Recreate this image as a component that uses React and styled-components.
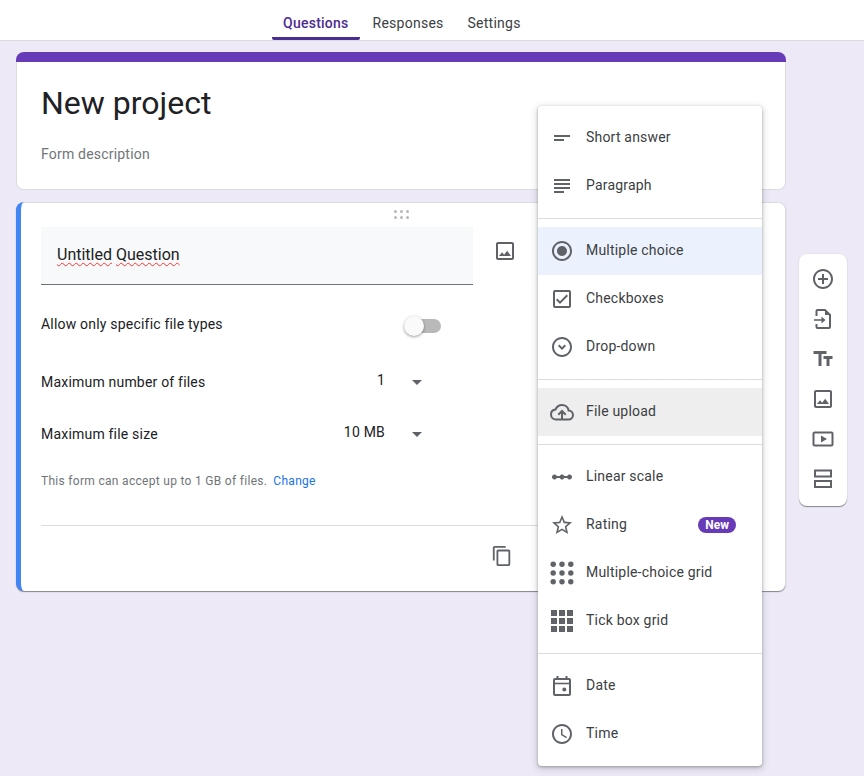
import React from "react";
import styled, { createGlobalStyle } from "styled-components";

const GlobalStyle = createGlobalStyle`
  *, *:before, *:after { box-sizing: border-box; }
  html, body { margin: 0; height: 100%; }
  body {
    background: #ede9f7;
    font-family: Roboto, "Liberation Sans", Arial, sans-serif;
    overflow: hidden;
  }
`;

const paths = {
  shortText: "M4 9h16v2H4V9zm0 4h10v2H4v-2z",
  paragraph: "M14 17H4v2h10v-2zm6-8H4v2h16V9zM4 15h16v-2H4v2zM4 5v2h16V5H4z",
  radio: "M12 7c-2.76 0-5 2.24-5 5s2.24 5 5 5 5-2.24 5-5-2.24-5-5-5zm0-5C6.48 2 2 6.48 2 12s4.48 10 10 10 10-4.48 10-10S17.52 2 12 2zm0 18c-4.42 0-8-3.58-8-8s3.58-8 8-8 8 3.58 8 8-3.58 8-8 8z",
  checkbox: "M19 3H5a2 2 0 0 0-2 2v14a2 2 0 0 0 2 2h14a2 2 0 0 0 2-2V5a2 2 0 0 0-2-2zm0 16H5V5h14v14zM17.99 9l-1.41-1.42-6.59 6.59-2.58-2.57-1.42 1.41 4 3.99z",
  dropdown: "M12 2C6.48 2 2 6.48 2 12s4.48 10 10 10 10-4.48 10-10S17.52 2 12 2zm0 18c-4.42 0-8-3.58-8-8s3.58-8 8-8 8 3.58 8 8-3.58 8-8 8zm0-5l-4-4 1.41-1.41L12 12.17l2.59-2.58L16 11z",
  scale: "M19.5 9.5c-1.03 0-1.9.62-2.29 1.5h-2.92c-.39-.88-1.26-1.5-2.29-1.5s-1.9.62-2.29 1.5H6.79c-.39-.88-1.26-1.5-2.29-1.5C3.12 9.5 2 10.62 2 12s1.12 2.5 2.5 2.5c1.03 0 1.9-.62 2.29-1.5h2.92c.39.88 1.26 1.5 2.29 1.5s1.9-.62 2.29-1.5h2.92c.39.88 1.26 1.5 2.29 1.5 1.38 0 2.5-1.12 2.5-2.5s-1.12-2.5-2.5-2.5z",
  star: "M22 9.24l-7.19-.62L12 2 9.19 8.63 2 9.24l5.46 4.73L5.82 21 12 17.27 18.18 21l-1.63-7.03L22 9.24zM12 15.4l-3.76 2.27 1-4.28-3.32-2.88 4.38-.38L12 6.1l1.71 4.04 4.38.38-3.32 2.88 1 4.28L12 15.4z",
  time: "M11.99 2C6.47 2 2 6.48 2 12s4.47 10 9.99 10C17.52 22 22 17.52 22 12S17.52 2 11.99 2zM12 20c-4.42 0-8-3.58-8-8s3.58-8 8-8 8 3.58 8 8-3.58 8-8 8zm.5-13H11v6l5.25 3.15.75-1.23-4.5-2.67z",
  add: "M13 7h-2v4H7v2h4v4h2v-4h4v-2h-4V7zm-1-5C6.48 2 2 6.48 2 12s4.48 10 10 10 10-4.48 10-10S17.52 2 12 2zm0 18c-4.41 0-8-3.59-8-8s3.59-8 8-8 8 3.59 8 8-3.59 8-8 8z",
  title: "M2.5 4v3h5v12h3V7h5V4h-13zm19 5h-9v3h3v7h3v-7h3V9z",
  image: "M19 5v14H5V5h14m0-2H5c-1.1 0-2 .9-2 2v14c0 1.1.9 2 2 2h14c1.1 0 2-.9 2-2V5c0-1.1-.9-2-2-2zm-4.86 8.86l-3 3.87L9 13.14 6 17h12l-3.86-5.14z",
  copy: "M16 1H4c-1.1 0-2 .9-2 2v14h2V3h12V1zm3 4H8c-1.1 0-2 .9-2 2v14c0 1.1.9 2 2 2h11c1.1 0 2-.9 2-2V7c0-1.1-.9-2-2-2zm0 16H8V7h11v14z",
  arrow: "M7 10l5 5 5-5z",
};

const Line = styled.path`
  fill: none;
  stroke: currentColor;
  stroke-width: ${(p) => p.$w || 2};
`;

const Outline = styled.rect`
  fill: none;
  stroke: currentColor;
  stroke-width: 2;
`;

const extras = {
  dotGrid: [3.2, 12, 20.8].flatMap((y) =>
    [3.2, 12, 20.8].map((x) => <circle key={`${x}-${y}`} cx={x} cy={y} r="2.7" />)
  ),
  boxGrid: [1, 9, 17].flatMap((y) =>
    [1, 9, 17].map((x) => <rect key={`${x}-${y}`} x={x} y={y} width="6" height="6" />)
  ),
  upload: (
    <>
      <Line d="M6 19.500c-2.700 0-5-2.200-5-5 0-2.600 1.900-4.700 4.500-5C6.700 6.800 9.100 5 12 5c3.400 0 6.200 2.400 6.600 5.600 2.600.2 4.400 2.200 4.400 4.500 0 2.500-2 4.400-4.500 4.400H6z" />
      <Line d="M12 20v-8M8.300 14.700l3.700-3.700 3.700 3.700" />
    </>
  ),
  date: (
    <>
      <Outline x="4" y="5" width="16" height="16" rx="1" />
      <Line d="M7.500 2v4M16.500 2v4" />
      <Line d="M4 9.500h16" $w={1.600} />
      <circle cx="14.300" cy="15.500" r="2" />
    </>
  ),
  importFile: (
    <>
      <Line d="M5.500 9V4a1 1 0 0 1 1-1h7.500l5 5v12a1 1 0 0 1-1 1H6.500a1 1 0 0 1-1-1v-3" />
      <path d="M14 3v5h5z" />
      <Line d="M3 13h8" $w={1.600} />
      <path d="M10.500 9.500l4 3.500-4 3.500z" />
    </>
  ),
  video: (
    <>
      <Outline x="2.500" y="5.500" width="19" height="13" rx="1" />
      <path d="M10 8.500v7l6-3.500z" />
    </>
  ),
  section: (
    <>
      <Outline x="4" y="3.500" width="16" height="6" />
      <Outline x="4" y="14" width="16" height="6" />
    </>
  ),
};

const Svg = styled.svg`
  width: ${(p) => p.$size || 24}px;
  height: ${(p) => p.$size || 24}px;
  flex: none;
  fill: currentColor;
  color: #5f6368;
`;

const Icon = ({ name, extra, size }) => (
  <Svg viewBox="0 0 24 24" $size={size}>
    {paths[name] && <path d={paths[name]} fillRule="evenodd" />}
    {extras[extra]}
  </Svg>
);

const Header = styled.header`
  height: 41px;
  background: #fff;
  border-bottom: 1px solid #dadce0;
  display: flex;
  padding-left: 272px;
`;

const Tab = styled.div`
  height: 40px;
  padding: 14px 11px 0;
  margin-right: 2px;
  font-size: 14px;
  line-height: 18px;
  letter-spacing: 0.25px;
  font-weight: ${(p) => (p.$active ? 500 : 400)};
  color: ${(p) => (p.$active ? "#4d2c91" : "#3c4043")};
  border-bottom: 3px solid ${(p) => (p.$active ? "#4d2c91" : "transparent")};
  border-radius: 0 0 2px 2px;
`;

const Main = styled.main`
  display: flex;
  gap: 13px;
  padding: 11px 0 0 16px;
`;

const Column = styled.div`
  width: 770px;
  display: flex;
  flex-direction: column;
  gap: 12px;
`;

const TitleCard = styled.section`
  height: 138px;
  background: #fff;
  border-top: 10px solid #673ab7;
  border-radius: 8px;
  padding: 20px 25px 0;
  box-shadow: inset 1px 0 #dadce0, inset -1px 0 #dadce0, inset 0 -1px #dadce0;
`;

const FormTitle = styled.h1`
  margin: 0;
  font-size: 32px;
  font-weight: 400;
  line-height: 42px;
  color: #202124;
`;

const FormDescription = styled.p`
  margin: 20px 0 0;
  font-size: 14px;
  line-height: 20px;
  letter-spacing: 0.2px;
  color: #70757a;
`;

const QuestionCard = styled.section`
  height: 389px;
  background: #fff;
  border-left: 5px solid #4285f4;
  border-radius: 8px;
  padding: 0 24px 0 20px;
  box-shadow: inset 0 1px #dadce0, inset -1px 0 #dadce0, 0 1px 1px rgba(60, 64, 67, 0.6);
`;

const DragHandle = styled.div`
  height: 25px;
  display: grid;
  grid-template-columns: repeat(3, 3px);
  grid-auto-rows: 3px;
  gap: 3px;
  justify-content: center;
  align-content: start;
  padding: 8px 8px 0 0;
  margin-right: -8px;

  span {
    border-radius: 50%;
    background: #b5b7ba;
  }
`;

const FieldRow = styled.div`
  display: flex;
  align-items: flex-start;
  gap: 20px;
`;

const TitleField = styled.div`
  width: 432px;
  height: 58px;
  background: #f8f9fa;
  border-bottom: 1px solid #70757a;
  padding: 18px 16px 0;
  font-size: 16px;
  line-height: 20px;
  color: #202124;
`;

const Misspelt = styled.span`
  text-decoration: underline wavy #f33 1.2px;
  text-underline-offset: 2px;
`;

const ImageButton = styled.div`
  margin-top: 12px;
  display: flex;
`;

const SettingRow = styled.div`
  width: 400px;
  height: 30px;
  margin-top: ${(p) => p.$top}px;
  display: flex;
  align-items: center;
  font-size: 14px;
  letter-spacing: 0.2px;
  color: #202124;
`;

const Track = styled.div`
  margin-left: auto;
  width: 34px;
  height: 14px;
  margin-top: 4px;
  border-radius: 7px;
  background: #b9b9b9;
  position: relative;
`;

const Thumb = styled.div`
  position: absolute;
  left: -3px;
  top: -3px;
  width: 20px;
  height: 20px;
  border-radius: 50%;
  background: #fafafa;
  box-shadow: 0 1px 3px rgba(0, 0, 0, 0.4);
`;

const Select = styled.div`
  margin-left: auto;
  display: flex;
  align-items: center;
  gap: 20px;
  padding-right: 12px;
`;

const SelectValue = styled.span`
  padding-bottom: 4px;
`;

const Hint = styled.p`
  margin: 24px 0 0;
  font-size: 12px;
  line-height: 16px;
  letter-spacing: 0.3px;
  color: #70757a;
`;

const HintLink = styled.span`
  margin-left: 6px;
  color: #1a73e8;
`;

const Footer = styled.div`
  margin-top: 36px;
  border-top: 1px solid #dadce0;
  padding: 19px 249px 0 0;
  display: flex;
  justify-content: flex-end;
`;

const Menu = styled.nav`
  position: absolute;
  left: 538px;
  top: 106px;
  width: 224px;
  height: 660px;
  background: #fff;
  border-radius: 4px;
  padding-top: 8px;
  box-shadow: 0 1px 3px rgba(60, 64, 67, 0.4), 0 2px 6px 2px rgba(60, 64, 67, 0.15);
`;

const MenuGroup = styled.div`
  padding-bottom: 8px;
  margin-bottom: 8px;
  border-bottom: 1px solid #dadce0;

  &:last-child {
    border-bottom: 0;
    margin-bottom: 0;
  }
`;

const MenuItem = styled.div`
  height: 48px;
  display: flex;
  align-items: center;
  gap: 12px;
  padding: 0 26px 0 12px;
  font-size: 14px;
  letter-spacing: 0.2px;
  color: #3c4043;
  background: ${(p) => p.$bg || "transparent"};
`;

const MenuLabel = styled.span`
  padding-bottom: 2px;
`;

const Badge = styled.span`
  margin-left: auto;
  height: 16px;
  padding: 0 7px;
  border-radius: 8px;
  background: #673ab7;
  color: #fff;
  font-size: 12px;
  font-weight: 700;
  line-height: 16px;
  letter-spacing: 0;
`;

const Toolbar = styled.aside`
  margin-top: 201px;
  width: 48px;
  height: 253px;
  background: #fff;
  border-radius: 8px;
  padding: 6px 0 7px;
  display: flex;
  flex-direction: column;
  box-shadow: inset 0 1px #e4e4ea, 0 1px 1px rgba(60, 64, 67, 0.6);
`;

const ToolButton = styled.div`
  height: 40px;
  display: flex;
  align-items: center;
  justify-content: center;
`;

const menuGroups = [
  [
    { label: "Short answer", name: "shortText" },
    { label: "Paragraph", name: "paragraph" },
  ],
  [
    { label: "Multiple choice", name: "radio", bg: "#ebf2fd" },
    { label: "Checkboxes", name: "checkbox" },
    { label: "Drop-down", name: "dropdown" },
  ],
  [{ label: "File upload", extra: "upload", bg: "#eeeeee" }],
  [
    { label: "Linear scale", name: "scale" },
    { label: "Rating", name: "star", badge: "New" },
    { label: "Multiple-choice grid", extra: "dotGrid" },
    { label: "Tick box grid", extra: "boxGrid" },
  ],
  [
    { label: "Date", extra: "date" },
    { label: "Time", name: "time" },
  ],
];

const tools = [
  { name: "add" },
  { extra: "importFile" },
  { name: "title" },
  { name: "image" },
  { extra: "video" },
  { extra: "section" },
];

export default function App() {
  return (
    <>
      <GlobalStyle />
      <Header>
        <Tab $active>Questions</Tab>
        <Tab>Responses</Tab>
        <Tab>Settings</Tab>
      </Header>
      <Main>
        <Column>
          <TitleCard>
            <FormTitle>New project</FormTitle>
            <FormDescription>Form description</FormDescription>
          </TitleCard>
          <QuestionCard>
            <DragHandle>
              {[0, 1, 2, 3, 4, 5].map((i) => (
                <span key={i} />
              ))}
            </DragHandle>
            <FieldRow>
              <TitleField>
                <Misspelt>Untitled</Misspelt> <Misspelt>Question</Misspelt>
              </TitleField>
              <ImageButton>
                <Icon name="image" />
              </ImageButton>
            </FieldRow>
            <SettingRow $top={24}>
              Allow only specific file types
              <Track>
                <Thumb />
              </Track>
            </SettingRow>
            <SettingRow $top={28}>
              Maximum number of files
              <Select>
                <SelectValue>1</SelectValue>
                <Icon name="arrow" />
              </Select>
            </SettingRow>
            <SettingRow $top={22}>
              Maximum file size
              <Select>
                <SelectValue>10 MB</SelectValue>
                <Icon name="arrow" />
              </Select>
            </SettingRow>
            <Hint>
              This form can accept up to 1 GB of files.
              <HintLink>Change</HintLink>
            </Hint>
            <Footer>
              <Icon name="copy" size={22} />
            </Footer>
          </QuestionCard>
        </Column>
        <Toolbar>
          {tools.map((t, i) => (
            <ToolButton key={i}>
              <Icon name={t.name} extra={t.extra} />
            </ToolButton>
          ))}
        </Toolbar>
      </Main>
      <Menu>
        {menuGroups.map((group, g) => (
          <MenuGroup key={g}>
            {group.map((item) => (
              <MenuItem key={item.label} $bg={item.bg}>
                <Icon name={item.name} extra={item.extra} />
                <MenuLabel>{item.label}</MenuLabel>
                {item.badge && <Badge>{item.badge}</Badge>}
              </MenuItem>
            ))}
          </MenuGroup>
        ))}
      </Menu>
    </>
  );
}
